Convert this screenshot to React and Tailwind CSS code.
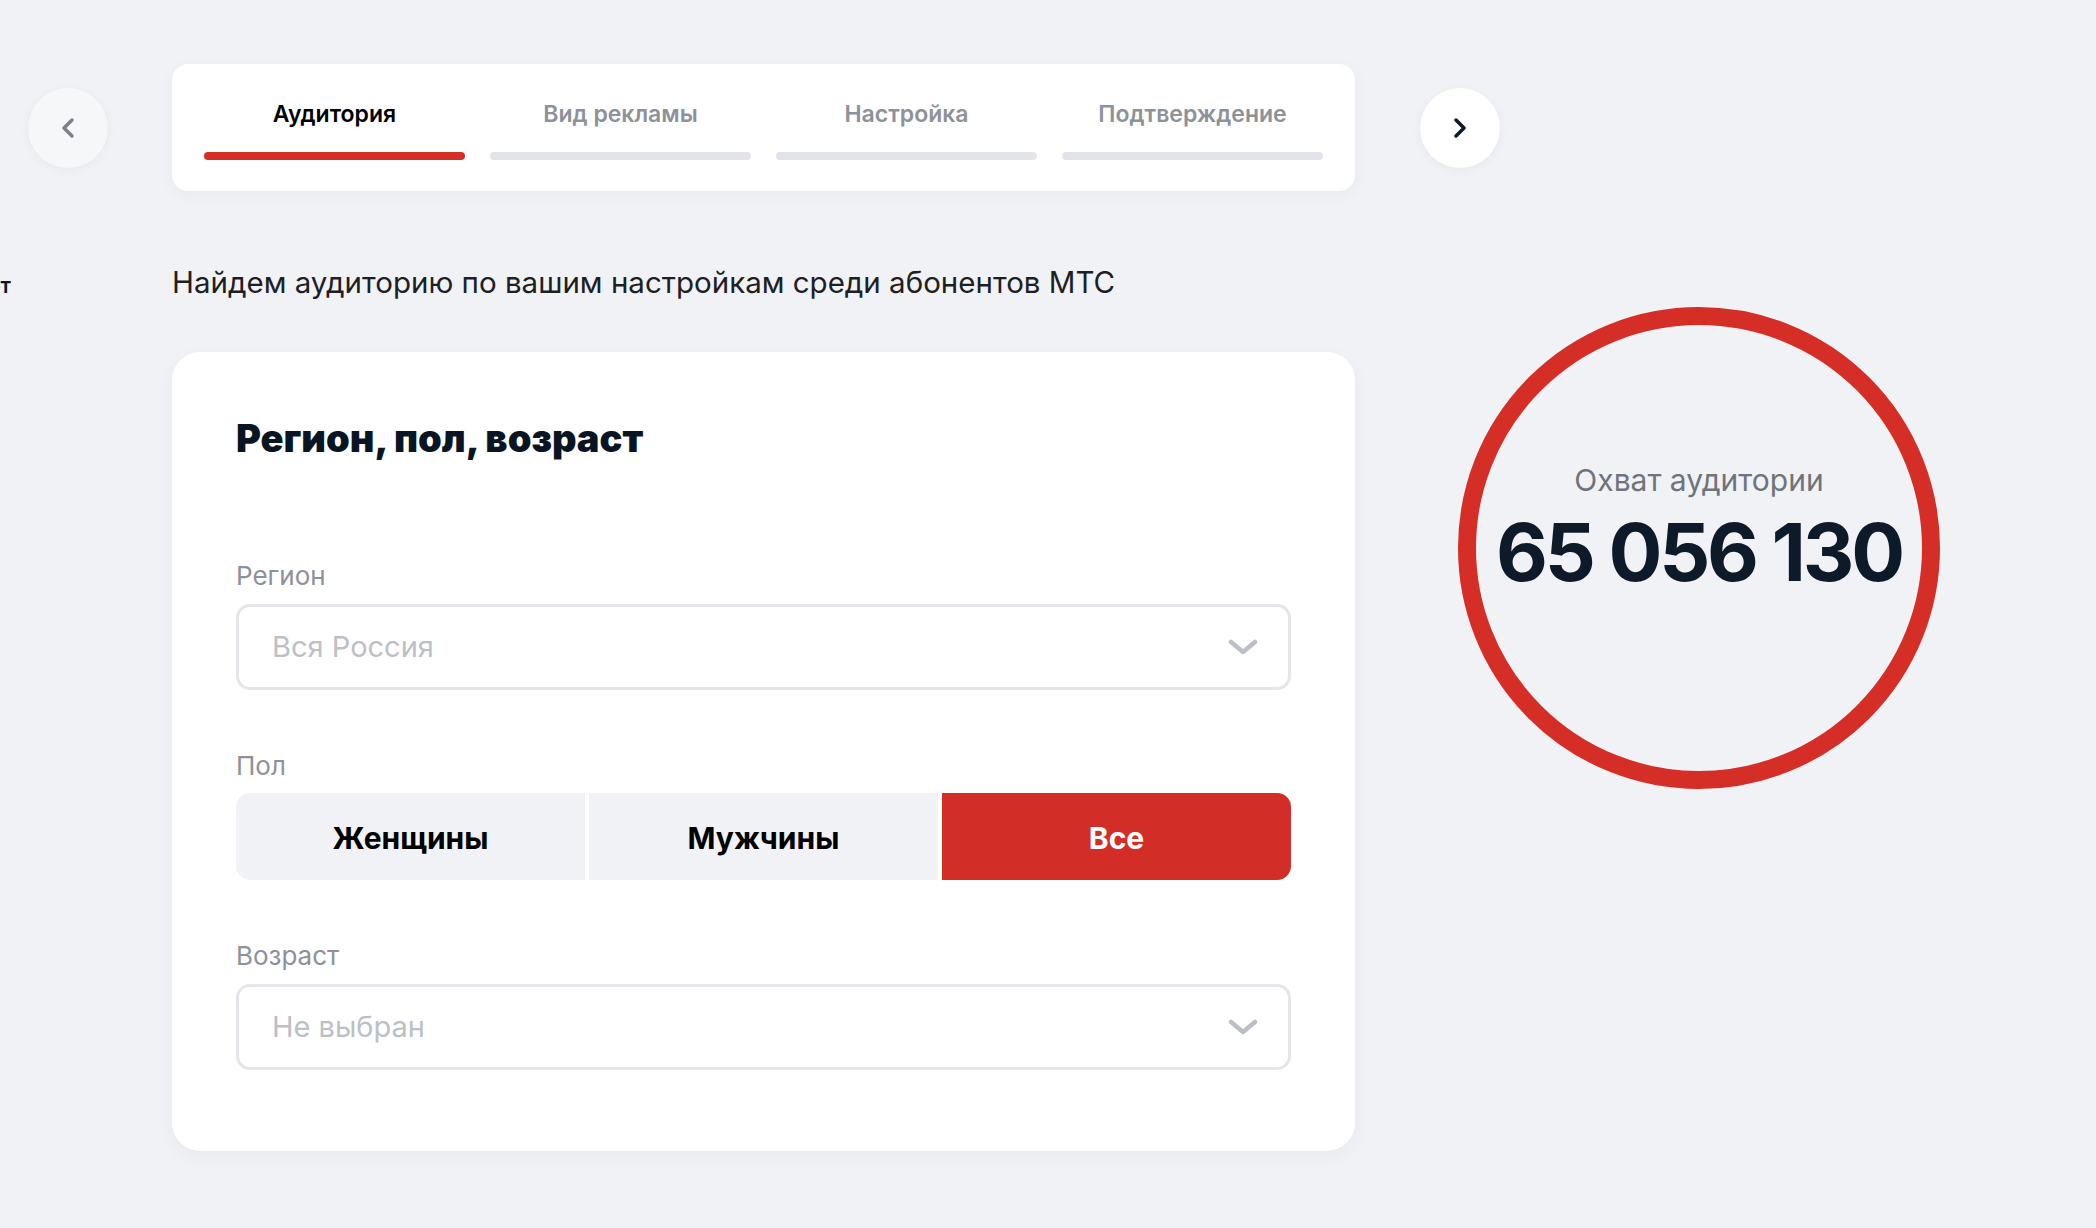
import React from "react";

const tabs = [
    { label: "Аудитория", active: true },
    { label: "Вид рекламы" },
    { label: "Настройка" },
    { label: "Подтверждение" },
];

const genders = [
    { label: "Женщины" },
    { label: "Мужчины" },
    { label: "Все", active: true },
];

const Chevron = ({ dir = "right", className }) => (
    <svg width="14" height="22" viewBox="0 0 14 22" className={className} fill="none">
        <polyline
            points={dir === "right" ? "3,3 11,11 3,19" : "11,3 3,11 11,19"}
            stroke="currentColor"
            strokeWidth="3.5"
            strokeLinecap="round"
            strokeLinejoin="round"
        />
    </svg>
);

const Select = ({ label, placeholder }) => (
    <div className="flex flex-col">
        <span className="text-[26px] leading-[32px] text-[#8d9199]">{label}</span>
        <div className="mt-3 h-[86px] rounded-[14px] border-[3px] border-[#e4e6ea] bg-white flex items-center justify-between pl-[33px] pr-[30px]">
            <span className="text-[29px] text-[#bcc0c6]">{placeholder}</span>
            <svg width="30" height="16" viewBox="0 0 30 16" fill="none">
                <polyline points="3,3 15,13 27,3" stroke="#bcc0c6" strokeWidth="4.5" strokeLinecap="round" strokeLinejoin="round" />
            </svg>
        </div>
    </div>
);

export default function App() {
    return (
        <div
            className="w-[2096px] h-[1228px] overflow-hidden bg-[#f1f2f6] flex text-[#0c1420]"
            style={{ fontFamily: "Inter, 'Noto Sans', sans-serif" }}
        >
            {/* left rail */}
            <div className="w-[172px] shrink-0 flex flex-col">
                <button className="mt-[88px] ml-[28px] w-20 h-20 rounded-full bg-[#f6f7f9] shadow-[0_2px_10px_rgba(20,30,60,0.05)] grid place-content-center text-[#7d8088]">
                    <Chevron dir="left" />
                </button>
                <div className="mt-[104px] w-[11px] overflow-hidden flex justify-end">
                    <span className="whitespace-nowrap text-[21px] leading-7 font-semibold text-[#0c1420]">Личный кабинет</span>
                </div>
            </div>

            {/* main column */}
            <div className="w-[1183px] shrink-0 flex flex-col">
                <div className="mt-[64px] h-[127px] rounded-2xl bg-white px-8 grid grid-cols-4 gap-[25px] shadow-[0_4px_16px_rgba(20,30,60,0.04)]">
                    {tabs.map((t) => (
                        <div key={t.label} className="flex flex-col items-center pt-9">
                            <span className={`text-[23px] leading-7 font-semibold ${t.active ? "text-black" : "text-[#8d9199]"}`}>
                                {t.label}
                            </span>
                            <div className={`mt-6 w-full h-2 rounded-full ${t.active ? "bg-[#d42e27]" : "bg-[#e2e4e9]"}`} />
                        </div>
                    ))}
                </div>

                <p className="mt-[73px] text-[29.5px] leading-9 text-[#1d2023]">
                    Найдем аудиторию по вашим настройкам среди абонентов МТС
                </p>

                <div className="mt-[52px] rounded-[28px] bg-white px-16 pt-16 pb-[81px] shadow-[0_6px_20px_rgba(20,30,60,0.04)]">
                    <h2 className="text-[38px] leading-[44px] font-black text-[#0a1523]">Регион, пол, возраст</h2>

                    <div className="mt-[100px]">
                        <Select label="Регион" placeholder="Вся Россия" />
                    </div>

                    <div className="mt-[60px] flex flex-col">
                        <span className="text-[26px] leading-[32px] text-[#8d9199]">Пол</span>
                        <div className="mt-[11px] h-[87px] flex gap-1 rounded-[14px] overflow-hidden">
                            {genders.map((g) => (
                                <button
                                    key={g.label}
                                    className={`flex-1 pt-1 text-[30px] font-bold ${g.active ? "bg-[#d22d26] text-white" : "bg-[#f1f2f5] text-black"}`}
                                >
                                    {g.label}
                                </button>
                            ))}
                        </div>
                    </div>

                    <div className="mt-[60px]">
                        <Select label="Возраст" placeholder="Не выбран" />
                    </div>
                </div>
            </div>

            {/* right column */}
            <div className="flex flex-col">
                <button className="mt-[88px] ml-[65px] w-20 h-20 rounded-full bg-white shadow-[0_2px_10px_rgba(20,30,60,0.05)] grid place-content-center text-[#0c1a2a]">
                    <Chevron dir="right" />
                </button>
                <div className="mt-[139px] ml-[103px] w-[482px] h-[482px] rounded-full border-[18px] border-[#d42e27] flex flex-col items-center pt-[137px]">
                    <span className="text-[30px] leading-9 text-[#6f737b]">Охват аудитории</span>
                    <span className="mt-[14px] text-[80px] leading-none font-bold tracking-[-0.04em] text-[#0c1a2a]">65 056 130</span>
                </div>
            </div>
        </div>
    );
}
